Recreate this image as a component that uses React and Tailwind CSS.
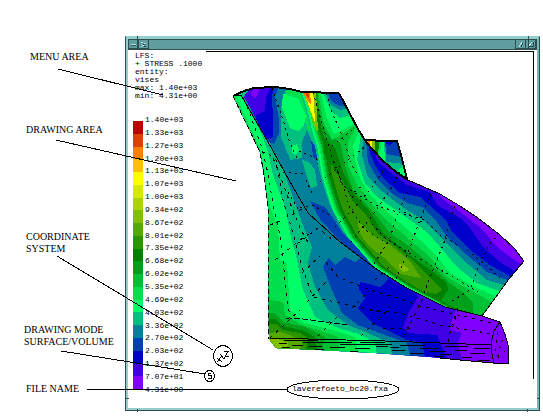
const SCALE = [
  { value: '1.40e+03', swatch: 'bg-[#c00000]' },
  { value: '1.33e+03', swatch: 'bg-[#e04000]' },
  { value: '1.27e+03', swatch: 'bg-[#ff8000]' },
  { value: '1.20e+03', swatch: 'bg-[#ffc000]' },
  { value: '1.13e+03', swatch: 'bg-[#ffff00]' },
  { value: '1.07e+03', swatch: 'bg-[#d6ea00]' },
  { value: '1.00e+03', swatch: 'bg-[#aad500]' },
  { value: '9.34e+02', swatch: 'bg-[#80c000]' },
  { value: '8.67e+02', swatch: 'bg-[#55aa00]' },
  { value: '8.01e+02', swatch: 'bg-[#2b9500]' },
  { value: '7.35e+02', swatch: 'bg-[#008000]' },
  { value: '6.68e+02', swatch: 'bg-[#00a01a]' },
  { value: '6.02e+02', swatch: 'bg-[#00c033]' },
  { value: '5.35e+02', swatch: 'bg-[#00e04d]' },
  { value: '4.69e+02', swatch: 'bg-[#00ff66]' },
  { value: '4.03e+02', swatch: 'bg-[#00c080]' },
  { value: '3.36e+02', swatch: 'bg-[#008099]' },
  { value: '2.70e+02', swatch: 'bg-[#0040b3]' },
  { value: '2.03e+02', swatch: 'bg-[#0000cc]' },
  { value: '1.37e+02', swatch: 'bg-[#4000e6]' },
  { value: '7.07e+01', swatch: 'bg-[#8000ff]' },
  { value: '4.31e+00' },
];

const EDGE =
  '233,96 241,95 272,149 285,173 308,213 340,242 375,268 405,287 445,307 482,316';
const BODY =
  '233,96 260,152 264,175 268,207 269,339 276,348 320,350 375,353 430,357 460,360 493,363 509,364 508,345 505,334 500,322 482,316 445,307 405,287 375,268 340,242 308,213 285,173 272,149 241,95';
const BLADE =
  '233,96 244,91 254,88 275,87 290,89 302,92 339,93 349,112 358,129 366,142 382,160 396,172 408,180 440,194 460,206 478,218 500,235 515,249 524,261 509,279 482,316 445,307 405,287 375,268 340,242 308,213 285,173 272,149 241,95';
const TAB = '366,140 375,140 376,141 397,141 401,155 407,179 395,172 380,158';

// each entry fills everything to the lower left of its iso line
const BODY_LINES = [
  ['#4000e6', '457,307 452,320 450,330 462,333 458,343 462,360'],
  ['#0000cc', '413,288 418,297 409,312 403,327 408,333 437,335 441,345 447,358'],
  ['#0040b3', '388,274 388,280 380,287 369,284 360,282 359,289 365,298 358,308 372,323 387,330 407,340 422,343 425,357'],
  ['#008099', '362,257 355,262 345,257 335,265 328,258 323,267 332,290 342,313 358,325 385,335 407,343 410,355'],
  ['#00c080', '284,172 300,217 305,230 312,247 308,263 315,287 328,310 348,325 368,333 390,343 392,355'],
  ['#00ff66', '243,98 263,137 268,152 273,175 285,207 290,233 297,260 303,290 315,317 338,328 362,335 375,343 377,355'],
  ['#00e04d', '237,99 260,148 264,170 270,207 278,227 280,260 287,263 290,310 302,322 332,330 355,337 358,350'],
  ['#00c033', '234,100 258,150 264,190 268,255 270,300 283,302 285,315 302,325 325,332 338,337 340,355'],
  ['#00a01a', '200,313 275,313 283,322 305,327 325,337 322,350'],
  ['#008000', '200,320 275,319 283,326 305,331 315,337 316,350'],
  ['#2b9500', '200,330 276,324 283,330 300,333 308,338 306,350'],
  ['#55aa00', '200,334 268,333 280,332 292,336 303,340 300,350'],
  ['#80c000', '200,338 277,339 288,342 287,350'],
];

const BLADE_LINES = [
  ['#4000e6', '438,190 440,197 455,208 473,222 480,227 497,247 517,262 521,264'],
  ['#0000cc', '372,145 378,162 390,172 407,185 430,192 437,205 460,218 470,228 483,247 500,262 514,271'],
  ['#0040b3', '368,140 369,150 375,165 383,178 400,193 420,197 437,212 447,222 451,230 470,250 490,265 510,276'],
  ['#008099', '366,140 368,162 377,178 390,192 407,203 422,207 437,222 447,237 467,255 487,272 507,280'],
  ['#00c080', '363,138 362,155 367,175 378,188 393,200 407,210 420,218 427,223 443,240 463,260 487,280 504,285'],
  ['#00ff66', '361,135 357,160 365,183 377,197 393,208 407,218 427,232 440,247 457,267 477,283 499,291'],
  ['#00e04d', '359,132 353,145 355,160 360,178 368,192 383,208 400,223 420,240 437,257 450,273 477,288 495,296'],
  ['#00c033', '356,127 348,142 348,165 357,185 365,195 378,212 390,223 410,240 430,257 447,277 470,290 490,301'],
  ['#00a01a', '317,90 321,120 327,134 340,142 345,165 353,190 367,205 378,218 390,233 410,247 433,267 447,281 465,294 473,303 473,316'],
  ['#008000', '315,90 319,120 324,138 336,150 343,172 355,195 370,212 383,233 410,255 433,272 447,283 448,290 440,302 438,310'],
  ['#2b9500', '313,90 317,120 322,138 328,150 333,168 343,182 353,202 366,214 377,233 395,246 410,258 430,278 442,290 436,294 426,292'],
];

// the steep side of the ridge repeats one line, shifted step by step
const RIDGE = '301,90 308,112 312,130 317,145 322,175 327,192 333,210 348,237 362,253 374,267 405,287 445,308';
const RIDGE_STEPS = [
  ['#008000', 10],
  ['#00a01a', 7],
  ['#00c033', 5],
  ['#00e04d', 4],
  ['#00ff66', 2],
  ['#00c080', 0],
];

const BLADE_PATCHES = [
  ['#55aa00', '358,222 363,225 372,235 390,245 410,261 421,278 400,274 383,257 368,245 359,232'],
  ['#80c000', '399,264 406,266 409,270 403,272 399,268'],
  ['#008000', '325,142 337,154 338,168 328,164 324,152'],
  ['#00e04d', '318,90 323,120 332,140 345,132 360,122 340,90'],
  ['#00ff66', '320,90 327,118 334,134 350,126 358,118 340,90'],
  ['#00c080', '322,90 331,111 340,118 356,114 340,90'],
  ['#008099', '325,90 330,104 340,110 352,108 340,90'],
  ['#0040b3', '327,90 331,101 340,106 350,107 340,90'],
  ['#80c000', '302,90 316,90 317,112 318,132 314,126 309,108'],
  ['#ffff00', '303,90 313,90 314,104 315,122 311,112'],
  ['#ff8000', '302,90 310,90 311,105 308,102'],
  ['#e04000', '303,90 308,90 309,98 307,97'],
  ['#00e04d', '282,88 300,90 306,112 311,132 308,130 301,101 287,94'],
  ['#00ff66', '281,92 288,95 299,99 306,116 304,126 298,131 290,128 285,115 280,102'],
  ['#008099', '307,130 312,142 318,165 323,185 330,205 342,230 360,252 374,268 340,250 300,210 284,178 268,145 280,136 287,150 290,160 302,158 302,142'],
  ['#00c080', '302,160 309,162 315,170 317,186 311,188 306,174'],
  ['#00c080', '282,128 302,132 302,142 300,156 290,158 285,148'],
  ['#00ff66', '292,146 297,144 299,150 296,155 292,153'],
  ['#0040b3', '311,140 315,146 318,162 313,156'],
  ['#0040b3', '310,201 325,207 331,215 342,232 360,251 374,267 356,256 337,238 320,219'],
  ['#008099', '241,92 290,85 283,95 281,110 281,140 276,152 240,98'],
  ['#0040b3', '243,92 280,85 275,96 279,120 279,133 274,144 268,142'],
  ['#0000cc', '243,92 275,85 272,96 273,120 273,137 266,140'],
  ['#4000e6', '243,95 250,86 272,85 266,98 265,111 255,116'],
  ['#8000ff', '250,93 254,89 259,89 258,95 254,98'],
  ['#00c080', '233,96 245,90 250,88 243,98'],
  ['#00ff66', '233,96 243,91 240,97'],
];

const TAB_PATCHES = [
  ['#ffff00', '364,139 373,139 373,158'],
  ['#ff8000', '364,139 370,139 370,146'],
  ['#80c000', '372,139 376,139 377,158 372,153'],
  ['#008000', '375,139 379,139 378,160 375,156'],
  ['#00e04d', '379,139 382,139 381,165 378,162'],
  ['#00ff66', '381,139 384,139 385,165 380,162'],
  ['#0040b3', '385,139 399,139 402,158 386,154'],
  ['#0000cc', '385,139 396,139 390,145 386,144'],
  ['#008099', '386,154 402,157 404,164 386,162'],
  ['#00ff66', '398,170 404,166 408,181 400,178'],
];

const BODY_MESH = [
  '247,106 262,148 269,178 273,205 281,240 286,290 290,318 330,322 350,325',
  '262,152 266,152 276,160 283,200 295,240 303,270 313,297 345,304 385,313',
  '273,158 281,178 290,203 301,230 309,244',
  '270,225 280,221',
  '275,260 290,248 300,240 312,232',
  '292,215 303,208',
  '297,244 318,228 333,240',
  '302,273 320,256',
  '307,302 328,280',
  '318,336 337,317',
  '361,336 385,313 392,305',
  '326,262 338,277 370,290 398,298 420,306 450,313 492,323',
  '370,310 400,313 440,325 492,334',
  '270,338 285,324 300,310',
  '403,337 413,318 425,294',
  '448,342 452,325 458,308',
  '365,295 350,310',
  '375,280 390,266',
  '458,309 452,330',
  '383,328 412,329',
  '286,318 296,318 318,321 350,325',
  '498,332 495,348 501,363',
  '503,340 498,345 505,352',
];

const BLADE_MESH = [
  '272,88 283,120 290,143 297,158',
  '313,92 321,120 333,160 341,180 350,208 365,230 390,245',
  '326,93 333,115 340,130 347,150 352,165 358,175',
  '283,172 303,174',
  '299,151 316,158 318,164',
  '332,146 352,130',
  '306,180 312,193',
  '320,182 345,162 366,146',
  '350,196 364,184',
  '335,227 352,210 370,190 385,168',
  '351,242 372,216 392,187 400,172',
  '374,264 390,238 398,212 413,182',
  '396,279 410,248 418,225 431,193',
  '424,293 437,260 445,240 455,205',
  '452,301 470,290 480,262 492,240 499,236',
  '350,190 375,205 400,213 425,220 440,235 458,245',
  '372,224 385,238 407,252 450,275 478,292',
  '467,250 485,264 500,278',
  '404,212 422,222',
  '288,192 300,212',
  '300,208 312,205 330,215',
  '337,170 341,182 355,200',
];

const HATCH = [
  '284,340H318', '303,342H352', '340,344H392', '279,343H287', '292,345H303', '309,346H322', '330,347H345',
  '355,348H370', '376,346H388', '282,347H290', '315,349H324', '350,351H358', '392,350H405', '400,345H425',
  '410,353H424', '420,348H438', '430,351H446', '440,354H452', '445,346H468', '455,350H467', '462,357H472',
  '470,353H485', '474,348H490', '478,360H490', '400,341H412', '360,342H385', '434,356H443', '390,347H399',
];

const isoPath = (points) => `M200 60H${points.split(',')[0]}L${points}l8 6V400H200z`;

function StressModel() {
  return (
    <svg
      className="block shrink-0"
      width="294"
      height="282"
      viewBox="232 84 294 282"
      shapeRendering="crispEdges"
      role="img"
      aria-label="Mises stress model"
    >
      <defs>
        <clipPath id="body"><polygon points={BODY} /></clipPath>
        <clipPath id="blade"><polygon points={BLADE} /></clipPath>
        <clipPath id="tab"><polygon points={TAB} /></clipPath>
      </defs>
      <g clipPath="url(#body)">
        <rect x="232" y="84" width="294" height="282" fill="#8000ff" />
        {BODY_LINES.map(([fill, points]) => (
          <path key={fill} d={isoPath(points)} fill={fill} />
        ))}
      </g>
      <g clipPath="url(#tab)">
        <rect x="360" y="136" width="50" height="46" fill="#00c080" />
        {TAB_PATCHES.map(([fill, points]) => (
          <polygon key={points} points={points} fill={fill} />
        ))}
      </g>
      <g clipPath="url(#blade)">
        <rect x="232" y="84" width="294" height="282" fill="#8000ff" />
        {BLADE_LINES.map(([fill, points]) => (
          <path key={fill} d={isoPath(points)} fill={fill} />
        ))}
        {RIDGE_STEPS.map(([fill, shift]) => (
          <path key={fill} d={isoPath(RIDGE)} fill={fill} transform={`translate(${shift} 0)`} />
        ))}
        {BLADE_PATCHES.map(([fill, points]) => (
          <polygon key={points} points={points} fill={fill} />
        ))}
      </g>
      <g fill="none" stroke="#000">
        <g strokeDasharray="3 5">
          {BODY_MESH.map((points) => (
            <polyline key={points} points={points} />
          ))}
        </g>
        <g strokeDasharray="2 4">
          {BLADE_MESH.map((points) => (
            <polyline key={points} points={points} />
          ))}
        </g>
        {HATCH.map((d) => (
          <path key={d} d={`M${d}`} />
        ))}
        <polyline points={EDGE} />
        <polyline points="233,96 260,152 264,175 268,207 269,339" strokeDasharray="5 3" />
        <polyline points="269,338 385,341 440,343 492,345" />
        <polyline points="440,358 460,360 493,363 509,364 508,345 505,334 500,322 482,316" />
        <polyline points="500,322 494,331 491,343 492,354 494,363" />
        <polyline points="233,96 244,91 254,88 275,87 290,89 302,92 339,93" strokeWidth="2" />
        <polyline points="339,93 349,112 358,129 366,142 382,160 396,172 408,180" strokeWidth="2" />
        <polyline points="408,180 440,194 460,206 478,218 500,235 515,249 524,261 509,279 482,316" />
        <polyline points="366,140 375,140 376,141 397,141 401,155 407,179" strokeWidth="2" />
      </g>
    </svg>
  );
}

function Legend() {
  return (
    <div className="relative mt-[14px] h-[282px]">
      <div className="absolute left-[1px] top-[7px] flex h-[268px] w-[10px] flex-col">
        {SCALE.filter((step) => step.swatch).map((step) => (
          <span key={step.value} className={`flex-1 ${step.swatch}`} />
        ))}
      </div>
      <ul className="flex h-full flex-col justify-between pl-[13px]">
        {SCALE.map((step) => (
          <li key={step.value} className="leading-3">{step.value}</li>
        ))}
      </ul>
    </div>
  );
}

function TitleButton({ label, children }) {
  return (
    <button
      type="button"
      aria-label={label}
      className="flex h-full w-[10px] items-center justify-center border-r border-b border-[#2f4f4f] bg-[#5f9ea0]"
    >
      <svg width="7" height="7" viewBox="0 0 7 7" fill="none" shapeRendering="crispEdges">
        {children}
      </svg>
    </button>
  );
}

function ViewerWindow() {
  return (
    <section className="mt-9 flex-1 border border-[#2f4f4f] border-t-[#93cdcd]">
      <div className="border-2 border-[#93cdcd] border-r-[#78b8b8] bg-white">
        <header className="flex h-[11px] justify-between border border-[#2f4f4f] bg-[#5f9ea0]">
          <div className="flex">
            <TitleButton label="Window menu">
              <path d="M1 3.500H6" stroke="#b8e0e0" />
              <path d="M1 4.500H6" stroke="#2f4f4f" />
            </TitleButton>
            <TitleButton label="Pin">
              <path d="M1 1.500H3M4 2.500H6M2 4.500H4M1 5.500H2" stroke="#b8e0e0" />
              <path d="M3 3.500H5M4 5.500H6" stroke="#2f4f4f" />
            </TitleButton>
          </div>
          <div className="flex border-l border-[#2f4f4f]">
            <TitleButton label="Minimize">
              <path d="M5 1L2 6" stroke="#b8e0e0" />
              <path d="M6 2L4 6" stroke="#2f4f4f" />
            </TitleButton>
            <TitleButton label="Maximize">
              <path d="M5 1L2 5" stroke="#b8e0e0" />
              <path d="M1 5.500H6V1" stroke="#2f4f4f" />
            </TitleButton>
          </div>
        </header>
        <div className="flex pb-3 font-['Liberation_Mono',monospace] text-[8px] text-black">
          <div className="w-[78px] shrink-0 pl-1">
            <div className="pl-[3px] pt-[2px] leading-2 whitespace-pre">
              <p>LFS:</p>
              <p>+ STRESS .1000</p>
              <p>entity:</p>
              <p>vises</p>
              <p>max: 1.40e+03</p>
              <p>min: 4.31e+00</p>
            </div>
            <Legend />
          </div>
          <div className="flex-1">
            <main className="mr-[3px] mt-[1px] h-[328px] border-t border-r border-black pl-[26px] pt-8">
              <StressModel />
            </main>
            <p className="pl-[86px] pt-1 leading-3">laverefoeto_bc20.fxa</p>
          </div>
        </div>
      </div>
    </section>
  );
}

function Callouts() {
  return (
    <svg
      className="pointer-events-none absolute left-0 top-0"
      width="543"
      height="417"
      viewBox="0 0 543 417"
      fill="none"
      stroke="#000"
      shapeRendering="crispEdges"
      aria-hidden="true"
    >
      <path d="M58 69L163 95M56 140L236 181M57 256L213 350M61 351L205 374M87 389.500H288" />
      <ellipse cx="223" cy="356" rx="9.500" ry="10.500" />
      <ellipse cx="209.500" cy="376" rx="5" ry="5.500" />
      <ellipse cx="343" cy="389.500" rx="56" ry="9.500" />
      <path d="M217 358L222 362M221 357L217 362M220 354L224 359L228 351M224 351H229M225 356H229" />
      <path d="M211 373.500H208V375.500H211V378.500H208" />
      <path d="M137.500 36V49M528.500 36V49M137.500 409V412M126 398.500H129M527.500 409V412M537 398.500H540" stroke="#2f4f4f" />
    </svg>
  );
}

export default function App() {
  return (
    <div className="relative flex w-full items-start bg-white pr-[3px] pb-1">
      <aside className="w-[125px] shrink-0 pl-[26px] pt-[51px] font-['Liberation_Serif',serif] text-[10px] leading-3 whitespace-nowrap text-black">
        <p className="pl-1">MENU AREA</p>
        <p className="mt-[61px]">DRAWING AREA</p>
        <p className="mt-[95px]">COORDINATE<br />SYSTEM</p>
        <p className="-ml-[2px] mt-[69px]">DRAWING MODE<br />SURFACE/VOLUME</p>
        <p className="mt-[35px]">FILE NAME</p>
      </aside>
      <ViewerWindow />
      <Callouts />
    </div>
  );
}
